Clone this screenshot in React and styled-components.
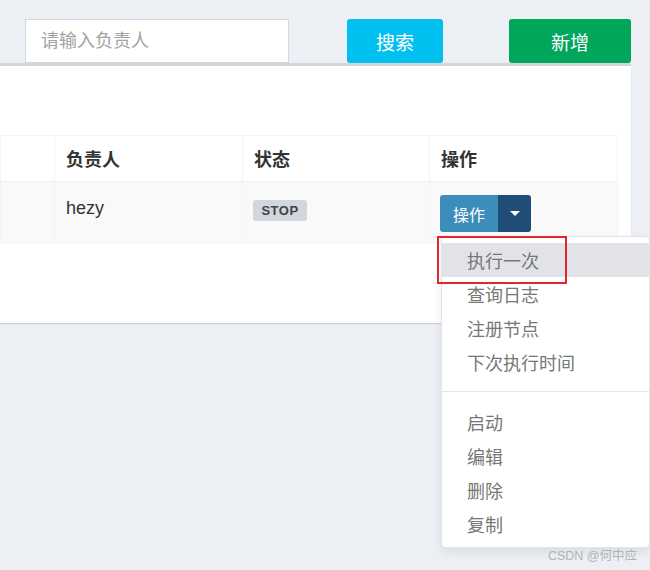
import styled, { createGlobalStyle } from "styled-components";

const GlobalStyle = createGlobalStyle`
  body {
    margin: 0;
    background: #ecf0f5;
    font-family: "Liberation Sans", "Noto Sans CJK SC", sans-serif;
    overflow: hidden;
  }
`;

const Page = styled.div`
  position: relative;
  width: 650px;
  height: 570px;
`;

const Toolbar = styled.div`
  display: flex;
  align-items: flex-start;
  height: 63px;
  padding-top: 19px;
  box-sizing: border-box;
`;

const SearchInput = styled.input`
  width: 264px;
  height: 44px;
  margin-left: 25px;
  box-sizing: border-box;
  border: 1px solid #d2d6de;
  background: #fff;
  padding: 0 15px;
  font-size: 18px;
  font-family: "Liberation Sans", "Noto Sans CJK SC", sans-serif;
  outline: none;
  &::placeholder {
    color: #a3a3a3;
  }
`;

const ToolButton = styled.button`
  width: ${(p) => p.width}px;
  height: 44px;
  margin-left: ${(p) => p.gap}px;
  border: none;
  border-radius: 3px;
  background: ${(p) => p.color};
  color: #fff;
  font-size: 19px;
  font-family: "Noto Sans CJK SC", sans-serif;
`;

const Box = styled.div`
  width: 631px;
  height: 260px;
  box-sizing: border-box;
  background: #fff;
  border-top: 3px solid #d2d6de;
  box-shadow: 0 1px 1px rgba(0, 0, 0, 0.12);
  padding: 69px 14px 0 0;
`;

const Table = styled.table`
  width: 617px;
  border-collapse: collapse;
  table-layout: fixed;
  font-size: 18px;
  color: #333;
`;

const Th = styled.th`
  width: ${(p) => p.width}px;
  box-sizing: border-box;
  text-align: left;
  font-weight: 700;
  font-family: "Noto Sans CJK SC", sans-serif;
  padding: 10px 11px;
  line-height: 25px;
  border: 1px solid #f4f4f4;
  border-bottom-width: 2px;
  background: #fff;
`;

const Td = styled.td`
  vertical-align: top;
  padding: 12px 11px 11px;
  line-height: 26px;
  border: 1px solid #f4f4f4;
  background: #f9f9f9;
`;

const StatusTd = styled(Td)`
  padding-left: 10px;
`;

const ActionTd = styled(Td)`
  padding-left: 10px;
`;

const Label = styled.span`
  display: inline-block;
  margin-top: 5px;
  width: 54px;
  height: 21px;
  line-height: 21px;
  text-align: center;
  border-radius: 3px;
  background: #d2d6de;
  color: #444;
  font-size: 13px;
  font-weight: 700;
  letter-spacing: 0.5px;
`;

const BtnGroup = styled.div`
  position: relative;
  display: flex;
  width: fit-content;
  height: 37px;
`;

const MainBtn = styled.button`
  width: 58px;
  height: 37px;
  border: none;
  border-radius: 3px 0 0 3px;
  background: #3c8dbc;
  color: #fff;
  font-size: 16px;
  font-family: "Noto Sans CJK SC", sans-serif;
  padding: 0;
`;

const CaretBtn = styled.button`
  width: 33px;
  height: 37px;
  border: none;
  border-radius: 0 3px 3px 0;
  background: #1f4d78;
  display: flex;
  align-items: center;
  justify-content: center;
  padding: 0;
`;

const Caret = styled.span`
  width: 0;
  height: 0;
  border-left: 5px solid transparent;
  border-right: 5px solid transparent;
  border-top: 5px solid #fff;
`;

const Menu = styled.ul`
  position: absolute;
  top: 41px;
  left: 1px;
  width: 207px;
  margin: 0;
  padding: 6px 0;
  list-style: none;
  background: #fff;
  border: 1px solid #e3e5ea;
  border-radius: 4px;
  box-shadow: 0 4px 10px rgba(0, 0, 0, 0.08);
  z-index: 10;
`;

const MenuItem = styled.li`
  height: 34px;
  line-height: 34px;
  padding-left: 25px;
  font-size: 18px;
  font-family: "Noto Sans CJK SC", sans-serif;
  color: #777;
  white-space: nowrap;
  background: ${(p) => (p.active ? "#e1e3e9" : "transparent")};
`;

const Divider = styled.li`
  height: 1px;
  margin: 12px 0 13px;
  background: #e5e5e5;
`;

const Highlight = styled.div`
  position: absolute;
  left: -5px;
  top: -1px;
  width: 130px;
  height: 48px;
  box-sizing: border-box;
  border: 2px solid #e3262c;
  pointer-events: none;
`;

const Watermark = styled.div`
  position: absolute;
  right: 13px;
  bottom: 6px;
  z-index: 20;
  font-size: 12.5px;
  color: #b0b3b8;
  font-family: "Liberation Sans", "Noto Sans CJK SC", sans-serif;
`;

const topItems = ["执行一次", "查询日志", "注册节点", "下次执行时间"];
const bottomItems = ["启动", "编辑", "删除", "复制"];

export default function App() {
  return (
    <Page>
      <GlobalStyle />
      <Toolbar>
        <SearchInput placeholder="请输入负责人" />
        <ToolButton width={96} gap={58} color="#00c0ef">搜索</ToolButton>
        <ToolButton width={122} gap={66} color="#00a65a">新增</ToolButton>
      </Toolbar>
      <Box>
        <Table>
          <thead>
            <tr>
              <Th width={54} />
              <Th width={188}>负责人</Th>
              <Th width={187}>状态</Th>
              <Th width={188}>操作</Th>
            </tr>
          </thead>
          <tbody>
            <tr>
              <Td />
              <Td>hezy</Td>
              <StatusTd>
                <Label>STOP</Label>
              </StatusTd>
              <ActionTd>
                <BtnGroup>
                  <MainBtn>操作</MainBtn>
                  <CaretBtn>
                    <Caret />
                  </CaretBtn>
                  <Menu>
                    {topItems.map((t, i) => (
                      <MenuItem key={t} active={i === 0}>{t}</MenuItem>
                    ))}
                    <Divider />
                    {bottomItems.map((t) => (
                      <MenuItem key={t}>{t}</MenuItem>
                    ))}
                    <Highlight />
                  </Menu>
                </BtnGroup>
              </ActionTd>
            </tr>
          </tbody>
        </Table>
      </Box>
      <Watermark>CSDN @何中应</Watermark>
    </Page>
  );
}
